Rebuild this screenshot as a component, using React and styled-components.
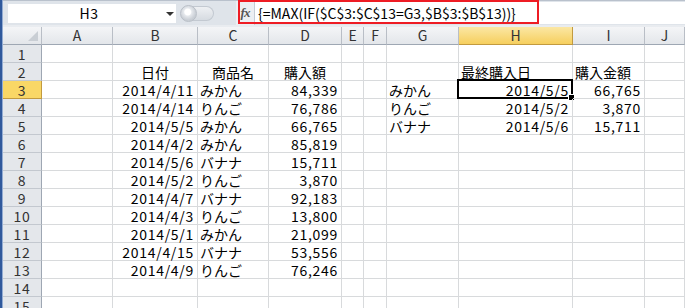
import React from "react";
import styled, { createGlobalStyle, css } from "styled-components";

const Global = createGlobalStyle`
  html, body { margin: 0; padding: 0; background: #ffffff; }
  body { width: 685px; height: 308px; overflow: hidden; font-family: "Noto Sans CJK JP", "Liberation Sans", sans-serif; }
`;

const FONT = `"Noto Sans CJK JP", "Liberation Sans", sans-serif`;

const Page = styled.div`
  display: flex;
  width: 685px;
  height: 308px;
  overflow: hidden;
`;

const Edge = styled.div`
  width: 3px;
  flex: none;
  background: linear-gradient(to right, #30599c 0 2px, #93acd3 2px 3px);
`;

const Main = styled.div`
  flex: 1;
  display: flex;
  flex-direction: column;
  min-width: 0;
`;

const Ribbon = styled.div`
  height: 6px;
  display: flex;
  background: #f3f5f8;
  border-bottom: 1px solid #b9c1cc;
  overflow: hidden;
`;

const RibbonGroup = styled.div`
  width: ${(p) => p.$w}px;
  flex: none;
  display: flex;
  justify-content: center;
  border-right: 1px solid #c9d0d9;
  font-family: ${FONT};
  font-size: 11px;
  line-height: 14px;
  color: #6d7a8e;
  & > span { margin-top: -10px; }
`;

const FormulaBar = styled.div`
  height: 24px;
  display: flex;
  align-items: center;
  padding-left: 5px;
  background: #dfe4ea;
  border-bottom: 2px solid #e9ecf0;
  position: relative;
`;

const NameBox = styled.div`
  width: 168px;
  height: 19px;
  background: #ffffff;
  display: flex;
  align-items: center;
  font-family: ${FONT};
  font-size: 14px;
  color: #000;
`;

const NameText = styled.span`
  flex: 1;
  text-align: center;
  padding-left: 4px;
  line-height: 19px;
  letter-spacing: 0.5px;
`;

const DropArrow = styled.span`
  width: 0;
  height: 0;
  border-left: 4px solid transparent;
  border-right: 4px solid transparent;
  border-top: 4px solid #333;
  margin-right: 2px;
  margin-top: 2px;
`;

const Knob = styled.div`
  width: 17px;
  height: 17px;
  margin-left: 4px;
  border-radius: 50%;
  border: 1px solid #b9bfc7;
  box-sizing: border-box;
  background: radial-gradient(circle at 45% 40%, #ffffff 0 3px, #e6e9ed 4px, #c9ced5 8px);
  position: relative;
  z-index: 1;
`;

const KnobBar = styled.div`
  width: 26px;
  height: 15px;
  margin-left: -9px;
  border-radius: 0 8px 8px 0;
  background: linear-gradient(#eef0f3, #d6dbe1);
  border: 1px solid #c3c9d1;
  border-left: none;
  box-sizing: border-box;
`;

const FxCell = styled.div`
  margin-left: 22px;
  height: 24px;
  width: 18px;
  display: flex;
  align-items: center;
  justify-content: center;
  background: #eceff3;
  border-right: 1px solid #c5ccd6;
  font-family: "Liberation Serif", serif;
  font-style: italic;
  font-weight: bold;
  font-size: 13px;
  color: #555;
  letter-spacing: -1px;
`;

const FormulaInput = styled.div`
  flex: 1;
  height: 22px;
  background: #ffffff;
  display: flex;
  align-items: center;
  padding-left: 3px;
  font-family: ${FONT};
  font-size: 14px;
  color: #000;
  white-space: nowrap;
`;

const RedBox = styled.div`
  position: absolute;
  left: 235px;
  top: -1px;
  width: 301px;
  height: 24px;
  border: 2px solid #ee1c24;
  box-sizing: border-box;
  pointer-events: none;
`;

const Grid = styled.div`
  display: grid;
  grid-template-columns: 39px 71px 85px 71px 73px 22px 23px 72px 114px 72px 40px;
  grid-auto-rows: 18px;
`;

const HeadCell = styled.div`
  box-sizing: border-box;
  border-right: 1px solid #b9bec6;
  border-bottom: 1px solid #9ea7b3;
  background: linear-gradient(#f4f5f7, #e3e6ea);
  font-family: ${FONT};
  font-size: 14px;
  line-height: 17px;
  color: #333;
  text-align: center;
  overflow: hidden;
  ${(p) =>
    p.$active &&
    css`
      background: linear-gradient(#fbe7a4, #f6cf5e);
      border-bottom: 1px solid #c29a3f;
      border-right: 1px solid #c29a3f;
    `}
`;

const Corner = styled(HeadCell)`
  position: relative;
  &::after {
    content: "";
    position: absolute;
    right: 3px;
    bottom: 3px;
    width: 0;
    height: 0;
    border-left: 10px solid transparent;
    border-bottom: 10px solid #c9ced4;
  }
`;

const RowHead = styled.div`
  box-sizing: border-box;
  border-right: 1px solid #9ea7b3;
  border-bottom: 1px solid #c3c8cf;
  background: #e4e7eb;
  font-family: ${FONT};
  font-size: 14px;
  line-height: 18px;
  color: #333;
  text-align: center;
  letter-spacing: 0.8px;
  ${(p) =>
    p.$active &&
    css`
      background: #f9d766;
      border-right: 1px solid #c29a3f;
      border-bottom: 1px solid #c29a3f;
    `}
`;

const Cell = styled.div`
  box-sizing: border-box;
  border-right: 1px solid #d8dadc;
  border-bottom: 1px solid #d8dadc;
  font-family: ${FONT};
  font-size: 14px;
  line-height: 18px;
  color: #000;
  white-space: nowrap;
  position: relative;
  text-align: ${(p) => p.$align || "left"};
  ${(p) =>
    p.$align === "right"
      ? css`
          padding-right: 3px;
          letter-spacing: 0.7px;
        `
      : p.$align === "center"
      ? css`
          padding: 0;
        `
      : css`
          padding-left: 2px;
        `}
`;

const Selection = styled.div`
  position: absolute;
  left: -2px;
  top: -2px;
  right: -1px;
  bottom: -1px;
  border: 2px solid #000;
  pointer-events: none;
  &::after {
    content: "";
    position: absolute;
    right: -4px;
    bottom: -4px;
    width: 5px;
    height: 5px;
    background: #000;
    border: 1px solid #fff;
  }
`;

const cols = ["A", "B", "C", "D", "E", "F", "G", "H", "I", "J"];

const data = [
  ["2014/4/11", "みかん", "84,339"],
  ["2014/4/14", "りんご", "76,786"],
  ["2014/5/5", "みかん", "66,765"],
  ["2014/4/2", "みかん", "85,819"],
  ["2014/5/6", "バナナ", "15,711"],
  ["2014/5/2", "りんご", "3,870"],
  ["2014/4/7", "バナナ", "92,183"],
  ["2014/4/3", "りんご", "13,800"],
  ["2014/5/1", "みかん", "21,099"],
  ["2014/4/15", "バナナ", "53,556"],
  ["2014/4/9", "りんご", "76,246"],
];

const summary = [
  ["みかん", "2014/5/5", "66,765"],
  ["りんご", "2014/5/2", "3,870"],
  ["バナナ", "2014/5/6", "15,711"],
];

function rowCells(r) {
  const cells = Array(10).fill(null).map(() => ({ v: "", a: "left" }));
  if (r === 2) {
    cells[1] = { v: "日付", a: "center" };
    cells[2] = { v: "商品名", a: "center" };
    cells[3] = { v: "購入額", a: "center" };
    cells[7] = { v: "最終購入日", a: "left" };
    cells[8] = { v: "購入金額", a: "left" };
  }
  if (r >= 3 && r <= 13) {
    const d = data[r - 3];
    cells[1] = { v: d[0], a: "right" };
    cells[2] = { v: d[1], a: "left" };
    cells[3] = { v: d[2], a: "right" };
  }
  if (r >= 3 && r <= 5) {
    const s = summary[r - 3];
    cells[6] = { v: s[0], a: "left" };
    cells[7] = { v: s[1], a: "right" };
    cells[8] = { v: s[2], a: "right" };
  }
  return cells;
}

export default function App() {
  const rows = Array.from({ length: 15 }, (_, i) => i + 1);
  return (
    <Page>
      <Global />
      <Edge />
      <Main>
        <Ribbon>
          <RibbonGroup $w={194}><span>クリップボード</span></RibbonGroup>
          <RibbonGroup $w={253}><span>フォント</span></RibbonGroup>
          <RibbonGroup $w={270}><span>配置</span></RibbonGroup>
        </Ribbon>
        <FormulaBar>
          <NameBox>
            <NameText>H3</NameText>
            <DropArrow />
          </NameBox>
          <Knob />
          <KnobBar />
          <FxCell>fx</FxCell>
          <FormulaInput>{"{=MAX(IF($C$3:$C$13=G3,$B$3:$B$13))}"}</FormulaInput>
          <RedBox />
        </FormulaBar>
        <Grid>
          <Corner />
          {cols.map((c) => (
            <HeadCell key={c} $active={c === "H"}>{c}</HeadCell>
          ))}
          {rows.map((r) => (
            <React.Fragment key={r}>
              <RowHead $active={r === 3}>{r}</RowHead>
              {rowCells(r).map((c, i) => (
                <Cell key={i} $align={c.a}>
                  {c.v}
                  {r === 3 && i === 7 && <Selection />}
                </Cell>
              ))}
            </React.Fragment>
          ))}
        </Grid>
      </Main>
    </Page>
  );
}
